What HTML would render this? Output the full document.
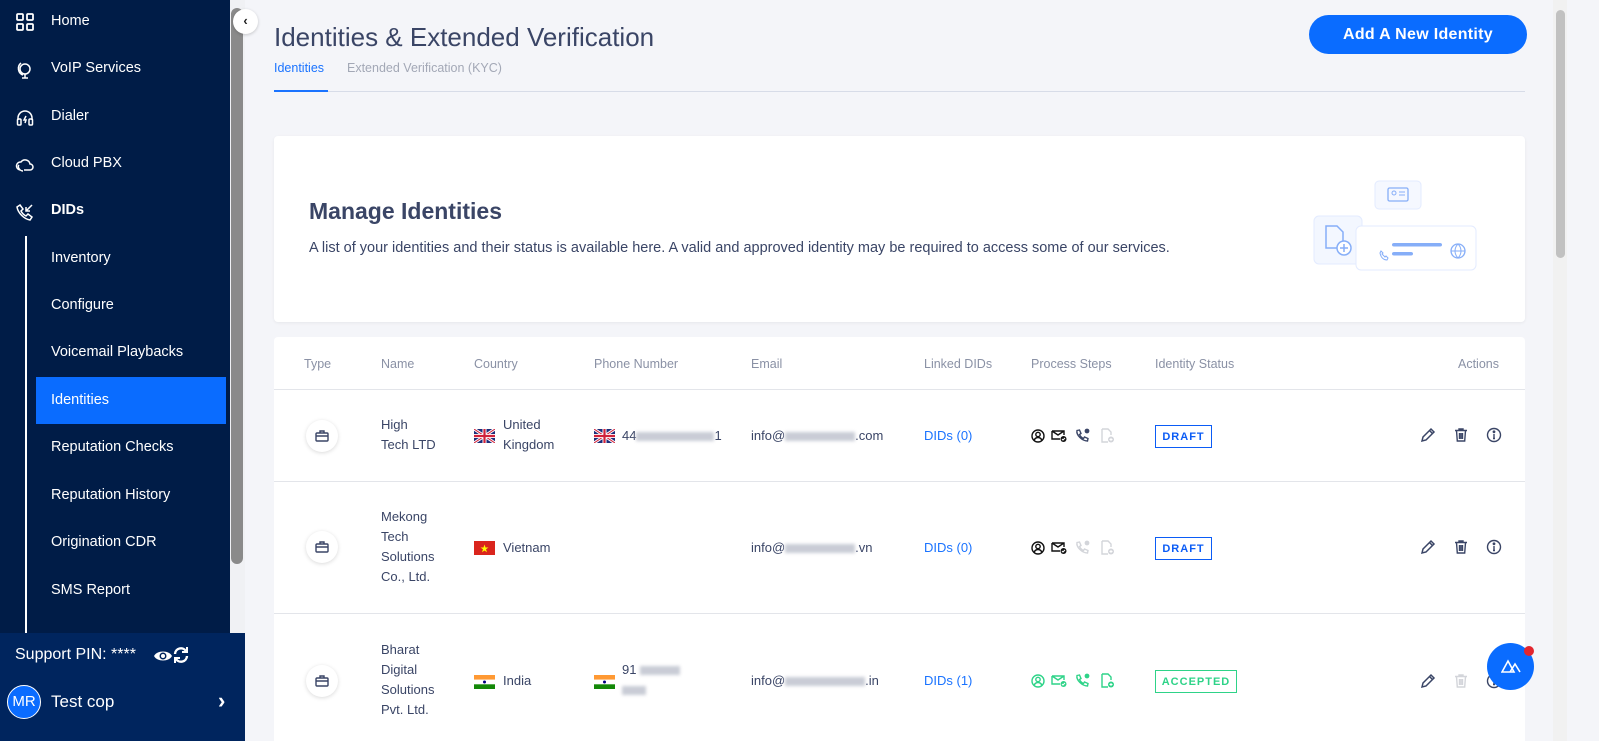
<!DOCTYPE html>
<html><head><meta charset="utf-8"><style>
*{box-sizing:border-box;margin:0;padding:0}
body{width:1599px;height:741px;overflow:hidden;background:#f4f5f9;font-family:"Liberation Sans",sans-serif;position:relative;color:#3a4566}
.a{position:absolute}
#sb{left:0;top:0;width:230px;height:633px;background:#001c47}
.nav{position:absolute;left:51px;color:#fff;font-size:14.5px;font-weight:500}
.ic{position:absolute;left:15px;width:20px;height:20px}
.sub{position:absolute;left:51px;color:#fff;font-size:14.5px}
#sup{left:0;top:633px;width:245px;height:108px;background:#00255e}
.th{position:absolute;top:357px;font-size:12.5px;color:#8a91a5}
.td{position:absolute;font-size:13px;color:#3a4566;line-height:20px}
.row{position:absolute;left:274px;width:1251px;background:#fff;border-top:1px solid #e3e5ea}
.tb{position:absolute;left:306px;width:32px;height:32px;border-radius:50%;background:#fff;box-shadow:0 1px 4px rgba(0,0,0,.15);display:flex;align-items:center;justify-content:center}
.st{position:absolute;left:1155px;height:23px;border:1.5px solid #0b5cf6;color:#0b5cf6;font-size:11px;font-weight:bold;letter-spacing:1px;display:flex;align-items:center;justify-content:center}
.blur{display:inline-block;height:9px;background:#c9ccd6;filter:blur(1.5px);vertical-align:middle}
.flag{position:absolute;width:21px;height:14px}
.ps{position:absolute;left:1030px}
.act{position:absolute;left:1420px}
</style></head><body>
<svg width="0" height="0" style="position:absolute">
 <defs>
  <g id="user" fill="none" stroke-width="1.4"><circle cx="7" cy="7" r="6"/><circle cx="7" cy="5.5" r="2.2"/><path d="M3 11.3c1-2 2.3-2.8 4-2.8s3 .8 4 2.8"/></g>
  <g id="mail" fill="none" stroke-width="1.4"><path d="M1 3h12v4M1 3v8h8M1 3l6 4 6-4"/><circle cx="12.5" cy="11" r="3" fill="currentColor" stroke="none"/><path d="M11 11l1 1 2-2" stroke="#fff" stroke-width="1"/></g>
  <g id="phone" fill="none" stroke-width="1.4"><path d="M2 2.5l2.5-.5 1.5 3.5-1.5 1c.8 1.8 2.2 3.2 4 4l1-1.5 3.5 1.5-.5 2.5C7 13 1 7 2 2.5z"/><circle cx="12" cy="3" r="2.4" fill="currentColor" stroke="none"/></g>
  <g id="doc" fill="none" stroke-width="1.4"><path d="M2 1h6l3 3v3M2 1v13h6"/><circle cx="11" cy="11.5" r="3" fill="currentColor" stroke="none"/><path d="M11 10v3M9.5 11.5h3" stroke="#fff" stroke-width="1"/></g>
  <g id="pen" fill="none" stroke="#3a4566" stroke-width="1.5"><path d="M2 14l1-4 8-8 3 3-8 8z M9.5 3.5l3 3"/></g>
  <g id="trash" fill="none" stroke-width="1.4"><path d="M2 3.5h12M6 3.5V2h4v1.5M3.5 3.5l.8 10.5h7.4l.8-10.5M6.5 6v6M9.5 6v6M8 6v6"/></g>
  <g id="info" fill="none" stroke="#3a4566" stroke-width="1.4"><circle cx="8" cy="8" r="6.5"/><path d="M8 7v4.5M7 11.5h2"/><circle cx="8" cy="4.8" r=".7" fill="#3a4566"/></g>
 </defs>
</svg>
<div id="sb" class="a">
 <svg class="ic" style="top:12px" viewBox="0 0 20 20" fill="none" stroke="#fff" stroke-width="1.8"><rect x="2" y="2" width="6" height="6" rx="1"/><rect x="12" y="2" width="6" height="6" rx="1"/><rect x="2" y="12" width="6" height="6" rx="1"/><rect x="12" y="12" width="6" height="6" rx="1"/></svg>
 <div class="nav" style="top:13px">Home</div>
 <svg class="ic" style="top:60px" viewBox="0 0 20 20" fill="none" stroke="#fff" stroke-width="1.5"><circle cx="10" cy="9" r="5"/><path d="M6 3a7 7 0 0 0 2 12M10 14v4M7 18h6"/></svg>
 <div class="nav" style="top:60px">VoIP Services</div>
 <svg class="ic" style="top:108px" viewBox="0 0 20 20" fill="none" stroke="#fff" stroke-width="1.5"><path d="M3 12V10a7 7 0 0 1 14 0v2"/><rect x="2.5" y="11" width="3.5" height="6" rx="1"/><rect x="14" y="11" width="3.5" height="6" rx="1"/><path d="M11 8l-2 4h2l-1 3"/></svg>
 <div class="nav" style="top:108px">Dialer</div>
 <svg class="ic" style="top:155px" viewBox="0 0 20 20" fill="none" stroke="#fff" stroke-width="1.5"><path d="M5 15a4 4 0 0 1 1-8 5 5 0 0 1 9 2 3 3 0 0 1 0 6H9"/><path d="M4 10c-2 2 1 6 4 6"/></svg>
 <div class="nav" style="top:155px">Cloud PBX</div>
 <svg class="ic" style="top:202px" viewBox="0 0 20 20" fill="none" stroke="#fff" stroke-width="1.5"><path d="M5 3l3 4-2 2c1 2 3 4 5 5l2-2 4 3-2 3C9 17 3 11 2 5z"/><path d="M17 3l-6 6M11 5v4h4"/></svg>
 <div class="nav" style="top:202px;font-weight:bold">DIDs</div>
 <div class="a" style="left:25px;top:236px;width:1.5px;height:397px;background:#fff"></div>
 <div class="sub" style="top:250px">Inventory</div>
 <div class="sub" style="top:297px">Configure</div>
 <div class="sub" style="top:344px">Voicemail Playbacks</div>
 <div class="a" style="left:36px;top:377px;width:190px;height:47px;background:#0a6cff"></div>
 <div class="sub" style="top:392px">Identities</div>
 <div class="sub" style="top:439px">Reputation Checks</div>
 <div class="sub" style="top:487px">Reputation History</div>
 <div class="sub" style="top:534px">Origination CDR</div>
 <div class="sub" style="top:582px">SMS Report</div>
</div>
<div class="a" style="left:230px;top:0;width:15px;height:633px;background:#f0f1f4"></div>
<div class="a" style="left:231px;top:8px;width:12px;height:556px;background:#8a8a8a;border-radius:6px"></div>
<div class="a" style="left:233px;top:9px;width:25px;height:25px;border-radius:50%;background:#fff;box-shadow:0 1px 3px rgba(0,0,0,.2);font-size:13px;color:#222;text-align:center;line-height:24px;font-weight:bold">‹</div>
<div id="sup" class="a">
 <div class="a" style="left:15px;top:13px;color:#fff;font-size:16px">Support PIN: ****</div>
 <svg class="a" style="left:153px;top:14px" width="20" height="18" viewBox="0 0 20 18"><path d="M1 9c3-6 15-6 18 0-3 6-15 6-18 0z" fill="#fff"/><circle cx="10" cy="9" r="3.5" fill="#00255e"/><circle cx="10" cy="9" r="2" fill="#fff"/></svg>
 <svg class="a" style="left:173px;top:13px" width="16" height="18" viewBox="0 0 16 18" fill="none" stroke="#fff" stroke-width="2.4"><path d="M2 8a6 6 0 0 1 11-3M14 10a6 6 0 0 1-11 3"/><path d="M14 1v5h-5M2 17v-5h5" stroke-width="2"/></svg>
 <div class="a" style="left:7px;top:52px;width:34px;height:34px;border-radius:50%;background:#0a6cff;border:1.5px solid #fff;color:#fff;font-size:15px;text-align:center;line-height:31px">MR</div>
 <div class="a" style="left:51px;top:59px;color:#fff;font-size:17px">Test cop</div>
 <div class="a" style="left:218px;top:55px;color:#fff;font-size:22px;font-weight:bold">›</div>
</div>

<div class="a" style="left:274px;top:22px;font-size:26px;color:#3a4566">Identities &amp; Extended Verification</div>
<div class="a" style="left:274px;top:61px;font-size:12.5px;color:#1a73ff">Identities</div>
<div class="a" style="left:347px;top:61px;font-size:12.5px;color:#a3a8b6">Extended Verification (KYC)</div>
<div class="a" style="left:274px;top:91px;width:1251px;height:1px;background:#d7dce8"></div>
<div class="a" style="left:274px;top:90px;width:54px;height:2px;background:#1a73ff"></div>
<div class="a" style="left:1309px;top:15px;width:218px;height:39px;border-radius:20px;background:#0a6cff;color:#fff;font-weight:bold;font-size:16px;text-align:center;line-height:39px;letter-spacing:.3px">Add A New Identity</div>

<div class="a" style="left:274px;top:136px;width:1251px;height:186px;background:#fff;border-radius:4px;box-shadow:0 1px 3px rgba(0,0,0,.06)">
 <div class="a" style="left:35px;top:62px;font-size:23px;font-weight:bold;color:#3a4566">Manage Identities</div>
 <div class="a" style="left:35px;top:104px;font-size:14.5px;color:#3a4566">A list of your identities and their status is available here. A valid and approved identity may be required to access some of our services.</div>
 <svg class="a" style="left:1030px;top:35px" width="180" height="110" viewBox="0 0 180 110">
  <rect x="71" y="10" width="46" height="28" rx="4" fill="#f5f8ff" stroke="#e3ebff"/>
  <rect x="84" y="17" width="20" height="13" rx="1.5" fill="none" stroke="#86aef8" stroke-width="1.3"/><circle cx="90" cy="22" r="2" fill="none" stroke="#86aef8"/><path d="M95 21h6M95 24h6" stroke="#86aef8"/>
  <rect x="10" y="45" width="48" height="48" rx="5" fill="#f3f7ff" stroke="#e3ebff"/>
  <path d="M22 55h11l6 6v16H22z" fill="none" stroke="#86aef8" stroke-width="1.5"/><circle cx="40" cy="77" r="7" fill="#fff" stroke="#86aef8" stroke-width="1.5"/><path d="M40 73v8M36 77h8" stroke="#86aef8" stroke-width="1.5"/>
  <rect x="52" y="71" width="120" height="44" rx="5" fill="#fff" stroke="#e3ebff" transform="translate(0,-16)"/>
  <path d="M76 82c1 5 4 7 7 7l1-2-2-2-1 1c-1-1-2-2-3-3l1-1-2-2z" fill="none" stroke="#86aef8"/>
  <rect x="88" y="72" width="50" height="3.5" rx="2" fill="#86aef8"/><rect x="88" y="81" width="21" height="3.5" rx="2" fill="#86aef8"/>
  <circle cx="154" cy="80" r="7" fill="none" stroke="#86aef8" stroke-width="1.3"/><path d="M147 80h14M154 73c-4 4-4 10 0 14M154 73c4 4 4 10 0 14" fill="none" stroke="#86aef8"/>
 </svg>
</div>

<div class="a" style="left:274px;top:337px;width:1251px;height:52px;background:#fff;border-radius:4px 4px 0 0"></div>
<div class="th" style="left:304px">Type</div><div class="th" style="left:381px">Name</div><div class="th" style="left:474px">Country</div><div class="th" style="left:594px">Phone Number</div><div class="th" style="left:751px">Email</div><div class="th" style="left:924px">Linked DIDs</div><div class="th" style="left:1031px">Process Steps</div><div class="th" style="left:1155px">Identity Status</div><div class="th" style="left:1458px">Actions</div>

<div class="row" style="top:389px;height:92px"></div>
<div class="row" style="top:481px;height:132px"></div>
<div class="row" style="top:613px;height:128px"></div>

<div class="tb" style="top:420px"><svg width="14" height="12" viewBox="0 0 14 12" fill="none" stroke="#3a4566" stroke-width="1.4"><rect x="1" y="3" width="12" height="8" rx="1"/><path d="M5 3V1h4v2M1 6h12"/></svg></div>
<div class="tb" style="top:531px"><svg width="14" height="12" viewBox="0 0 14 12" fill="none" stroke="#3a4566" stroke-width="1.4"><rect x="1" y="3" width="12" height="8" rx="1"/><path d="M5 3V1h4v2M1 6h12"/></svg></div>
<div class="tb" style="top:665px"><svg width="14" height="12" viewBox="0 0 14 12" fill="none" stroke="#3a4566" stroke-width="1.4"><rect x="1" y="3" width="12" height="8" rx="1"/><path d="M5 3V1h4v2M1 6h12"/></svg></div>

<!-- row1 -->
<div class="td" style="left:381px;top:415px">High<br>Tech LTD</div>
<svg class="flag" style="left:474px;top:429px" viewBox="0 0 21 14"><rect width="21" height="14" fill="#1d2d7a"/><path d="M0 0L21 14M21 0L0 14" stroke="#fff" stroke-width="3"/><path d="M0 0L21 14M21 0L0 14" stroke="#d0213a" stroke-width="1"/><path d="M10.5 0v14M0 7h21" stroke="#fff" stroke-width="4"/><path d="M10.5 0v14M0 7h21" stroke="#d0213a" stroke-width="2.2"/></svg>
<div class="td" style="left:503px;top:415px">United<br>Kingdom</div>
<svg class="flag" style="left:594px;top:429px" viewBox="0 0 21 14"><rect width="21" height="14" fill="#1d2d7a"/><path d="M0 0L21 14M21 0L0 14" stroke="#fff" stroke-width="3"/><path d="M0 0L21 14M21 0L0 14" stroke="#d0213a" stroke-width="1"/><path d="M10.5 0v14M0 7h21" stroke="#fff" stroke-width="4"/><path d="M10.5 0v14M0 7h21" stroke="#d0213a" stroke-width="2.2"/></svg>
<div class="td" style="left:622px;top:426px">44<span class="blur" style="width:78px"></span>1</div>
<div class="td" style="left:751px;top:426px">info@<span class="blur" style="width:70px"></span>.com</div>
<div class="td" style="left:924px;top:426px;color:#1a73ff">DIDs (0)</div>
<svg class="ps" style="top:428px" width="90" height="16" viewBox="0 0 90 16">
 <use href="#user" x="1" y="1" stroke="#111" color="#111"/><use href="#mail" x="21" y="0" stroke="#111" color="#111"/><use href="#phone" x="45" y="0" stroke="#3a4566" color="#3a4566"/><use href="#doc" x="70" y="0" stroke="#d3d5da" color="#d3d5da"/>
</svg>
<div class="st" style="top:425px;width:57px">DRAFT</div>

<!-- row2 -->
<div class="td" style="left:381px;top:507px">Mekong<br>Tech<br>Solutions<br>Co., Ltd.</div>
<svg class="flag" style="left:474px;top:541px" viewBox="0 0 21 14"><rect width="21" height="14" fill="#da251d"/><path d="M10.5 3.5l1 3h3l-2.5 1.8 1 3-2.5-1.8-2.5 1.8 1-3-2.5-1.8h3z" fill="#ff0"/></svg>
<div class="td" style="left:503px;top:538px">Vietnam</div>
<div class="td" style="left:751px;top:538px">info@<span class="blur" style="width:70px"></span>.vn</div>
<div class="td" style="left:924px;top:538px;color:#1a73ff">DIDs (0)</div>
<svg class="ps" style="top:540px" width="90" height="16" viewBox="0 0 90 16">
 <use href="#user" x="1" y="1" stroke="#111" color="#111"/><use href="#mail" x="21" y="0" stroke="#111" color="#111"/><use href="#phone" x="45" y="0" stroke="#d3d5da" color="#d3d5da"/><use href="#doc" x="70" y="0" stroke="#d3d5da" color="#d3d5da"/>
</svg>
<div class="st" style="top:537px;width:57px">DRAFT</div>

<!-- row3 -->
<div class="td" style="left:381px;top:640px">Bharat<br>Digital<br>Solutions<br>Pvt. Ltd.</div>
<svg class="flag" style="left:474px;top:675px" viewBox="0 0 21 14"><rect width="21" height="4.7" fill="#ff9933"/><rect y="4.7" width="21" height="4.6" fill="#fff"/><rect y="9.3" width="21" height="4.7" fill="#138808"/><circle cx="10.5" cy="7" r="1.5" fill="#000080"/></svg>
<div class="td" style="left:503px;top:671px">India</div>
<svg class="flag" style="left:594px;top:675px" viewBox="0 0 21 14"><rect width="21" height="4.7" fill="#ff9933"/><rect y="4.7" width="21" height="4.6" fill="#fff"/><rect y="9.3" width="21" height="4.7" fill="#138808"/><circle cx="10.5" cy="7" r="1.5" fill="#000080"/></svg>
<div class="td" style="left:622px;top:660px">91 <span class="blur" style="width:40px"></span><br><span class="blur" style="width:24px"></span></div>
<div class="td" style="left:751px;top:671px">info@<span class="blur" style="width:80px"></span>.in</div>
<div class="td" style="left:924px;top:671px;color:#1a73ff">DIDs (1)</div>
<svg class="ps" style="top:673px" width="90" height="16" viewBox="0 0 90 16">
 <use href="#user" x="1" y="1" stroke="#2ed388" color="#2ed388"/><use href="#mail" x="21" y="0" stroke="#2ed388" color="#2ed388"/><use href="#phone" x="45" y="0" stroke="#2ed388" color="#2ed388"/><use href="#doc" x="70" y="0" stroke="#2ed388" color="#2ed388"/>
</svg>
<div class="st" style="top:670px;width:82px;border-color:#2ed388;color:#2ed388">ACCEPTED</div>

<!-- actions -->
<svg class="act" style="top:427px" width="85" height="16" viewBox="0 0 85 16"><use href="#pen" x="0" y="0"/><use href="#trash" x="33" y="0" stroke="#3a4566"/><use href="#info" x="66" y="0"/></svg>
<svg class="act" style="top:539px" width="85" height="16" viewBox="0 0 85 16"><use href="#pen" x="0" y="0"/><use href="#trash" x="33" y="0" stroke="#3a4566"/><use href="#info" x="66" y="0"/></svg>
<svg class="act" style="top:673px" width="85" height="16" viewBox="0 0 85 16"><use href="#pen" x="0" y="0"/><use href="#trash" x="33" y="0" stroke="#d3d5da"/><use href="#info" x="66" y="0"/></svg>

<div class="a" style="left:1487px;top:643px;width:47px;height:47px;border-radius:50%;background:#0a6cff"><svg style="position:absolute;left:14px;top:15px" width="20" height="16" viewBox="0 0 20 16" fill="none" stroke="#fff" stroke-width="1.6"><path d="M1 14L7 3l6 11zM9 14l5-8 5 8"/></svg></div>
<div class="a" style="left:1524px;top:646px;width:10px;height:10px;border-radius:50%;background:#e3262f"></div>

<div class="a" style="left:1553px;top:0;width:14px;height:741px;background:#f1f1f1"></div>
<div class="a" style="left:1556px;top:10px;width:9px;height:248px;background:#c1c1c1;border-radius:5px"></div>
</body></html>
